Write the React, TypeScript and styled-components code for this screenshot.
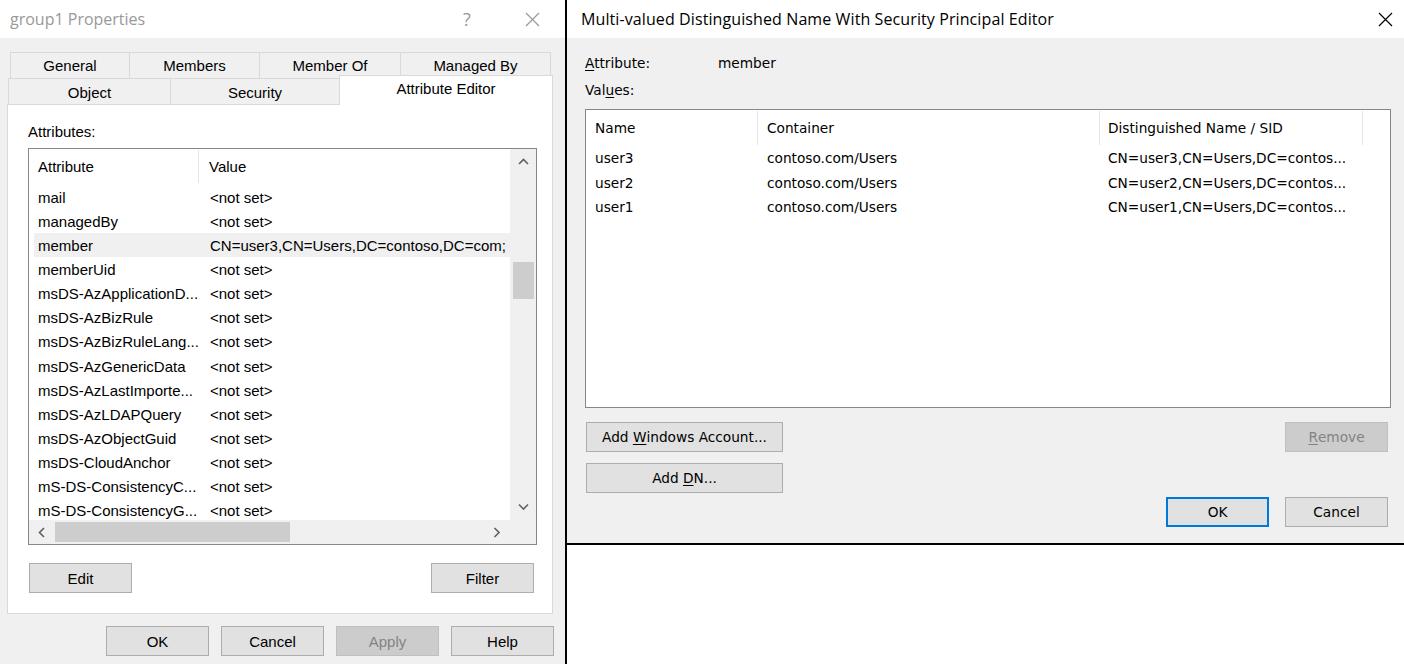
import React from "react";
import styled, { createGlobalStyle } from "styled-components";

const GlobalStyle = createGlobalStyle`
  *, *::before, *::after { box-sizing: border-box; }
  html, body { margin: 0; padding: 0; background: #ffffff; overflow: hidden; }
  #root { width: 1404px; height: 664px; }
`;

const CLASSIC = `"Liberation Sans", Arial, sans-serif`;
const TAHOMA = `"DejaVu Sans", Verdana, sans-serif`;
const SEGOE = `"Open Sans", "Noto Sans", sans-serif`;

const Screen = styled.div`
  display: flex;
  width: 1404px;
  height: 664px;
  background: #ffffff;
  overflow: hidden;
`;

/* ---------- shared window chrome ---------- */

const TitleBar = styled.div<{ $active?: boolean; $padLeft: number; $padRight: number }>`
  height: 38px;
  flex: none;
  display: flex;
  align-items: center;
  background: #ffffff;
  padding: 0 ${(p) => p.$padRight}px 0 ${(p) => p.$padLeft}px;
  font-family: ${SEGOE};
  font-size: 16px;
  letter-spacing: ${(p) => (p.$active ? "0.1px" : "0")};
  color: ${(p) => (p.$active ? "#000000" : "#999999")};
`;

const TitleText = styled.div`
  flex: 1;
  white-space: nowrap;
`;

const CaptionButtons = styled.div<{ $gap: number }>`
  display: flex;
  gap: ${(p) => p.$gap}px;
`;

const CaptionButton = styled.div<{ $active?: boolean }>`
  width: 36px;
  height: 38px;
  display: flex;
  align-items: center;
  justify-content: center;
  color: ${(p) => (p.$active ? "#000000" : "#999999")};
  font-family: ${SEGOE};
  font-size: 18px;
  letter-spacing: 0;
`;

const CloseGlyph = ({ color }: { color: string }) => (
  <svg width="15" height="15" viewBox="0 0 15 15">
    <path d="M1 1 L14 14 M14 1 L1 14" stroke={color} strokeWidth="1.2" fill="none" />
  </svg>
);

const Button = styled.div<{ $w: number; $disabled?: boolean; $default?: boolean }>`
  width: ${(p) => p.$w}px;
  height: 30px;
  flex: none;
  display: flex;
  align-items: center;
  justify-content: center;
  background: ${(p) => (p.$disabled ? "#cccccc" : "#e1e1e1")};
  border: ${(p) =>
    p.$default ? "2px solid #0078d7" : p.$disabled ? "1px solid #bfbfbf" : "1px solid #adadad"};
  color: ${(p) => (p.$disabled ? "#838383" : "#000000")};
  white-space: nowrap;
`;

const Chevron = ({ dir }: { dir: "up" | "down" | "left" | "right" }) => {
  const d =
    dir === "up"
      ? "M1 6 L5.5 1.5 L10 6"
      : dir === "down"
      ? "M1 1.5 L5.5 6 L10 1.5"
      : dir === "left"
      ? "M6 1 L1.5 5.5 L6 10"
      : "M1.5 1 L6 5.5 L1.5 10";
  const vertical = dir === "up" || dir === "down";
  return (
    <svg width={vertical ? 11 : 8} height={vertical ? 8 : 11} viewBox={vertical ? "0 0 11 8" : "0 0 8 11"}>
      <path d={d} stroke="#606060" strokeWidth="1.6" fill="none" />
    </svg>
  );
};

/* ---------- left: group1 Properties ---------- */

const PropertiesWindow = styled.div`
  width: 565px;
  height: 664px;
  flex: none;
  display: flex;
  flex-direction: column;
  background: #f0f0f0;
  font-family: ${CLASSIC};
  font-size: 15px;
  color: #000000;
`;

const TabArea = styled.div`
  display: flex;
  flex-direction: column;
  padding: 14px 12px 0 7px;
`;

const TabRow = styled.div<{ $indent: number }>`
  display: flex;
  align-items: flex-start;
  height: 26px;
  padding-left: ${(p) => p.$indent}px;
`;

const Tab = styled.div<{ $w: number; $selected?: boolean; $top?: boolean }>`
  width: ${(p) => p.$w}px;
  height: ${(p) => (p.$selected ? 30 : 26)}px;
  margin-top: ${(p) => (p.$selected ? -3 : 0)}px;
  margin-left: -1px;
  flex: none;
  display: flex;
  align-items: center;
  justify-content: center;
  padding-bottom: ${(p) => (p.$selected ? 5 : 0)}px;
  padding-top: ${(p) => (p.$top ? 0 : 1)}px;
  border: 1px solid #d9d9d9;
  border-bottom: none;
  background: ${(p) => (p.$selected ? "#ffffff" : "#f0f0f0")};
  position: relative;
  z-index: ${(p) => (p.$selected ? 2 : 1)};
  white-space: nowrap;
`;

const TabPanel = styled.div`
  height: 510px;
  background: #ffffff;
  border: 1px solid #d9d9d9;
  padding: 18px 0 0 20px;
  display: flex;
  flex-direction: column;
`;

const FieldLabel = styled.div`
  height: 17px;
  line-height: 17px;
`;

const ListBox = styled.div`
  margin-top: 8px;
  width: 509px;
  height: 397px;
  border: 1px solid #828790;
  background: #ffffff;
  display: grid;
  grid-template-columns: 1fr 26px;
  grid-template-rows: 1fr 24px;
`;

const ListContent = styled.div`
  overflow: hidden;
  display: flex;
  flex-direction: column;
`;

const AttrHeader = styled.div`
  display: grid;
  grid-template-columns: 170px 1fr;
  height: 36px;
  flex: none;
`;

const AttrHeaderCell = styled.div<{ $divider?: boolean; $pad: number }>`
  display: flex;
  align-items: center;
  padding-left: ${(p) => p.$pad}px;
  margin: 1px 0 2px;
  border-right: ${(p) => (p.$divider ? "1px solid #e5e5e5" : "none")};
`;

const AttrRow = styled.div<{ $highlight?: boolean }>`
  display: grid;
  grid-template-columns: 170px 1fr;
  height: 24.15px;
  flex: none;
  background: ${(p) =>
    p.$highlight ? "linear-gradient(to right, transparent 5px, #f0f0f0 5px)" : "transparent"};
`;

const AttrCell = styled.div<{ $pad: number }>`
  display: flex;
  align-items: center;
  padding-left: ${(p) => p.$pad}px;
  white-space: nowrap;
  overflow: hidden;
`;

const VScroll = styled.div`
  background: #f0f0f0;
  display: flex;
  flex-direction: column;
  align-items: center;
`;

const ArrowBox = styled.div<{ $w: number; $h: number }>`
  width: ${(p) => p.$w}px;
  height: ${(p) => p.$h}px;
  flex: none;
  display: flex;
  align-items: center;
  justify-content: center;
`;

const VTrack = styled.div`
  flex: 1;
  width: 100%;
  display: flex;
  flex-direction: column;
  align-items: center;
`;

const VThumb = styled.div<{ $offset: number; $size: number }>`
  margin-top: ${(p) => p.$offset}px;
  width: 21px;
  height: ${(p) => p.$size}px;
  background: #cdcdcd;
`;

const HScroll = styled.div`
  background: #f0f0f0;
  display: flex;
  align-items: center;
`;

const HTrack = styled.div`
  flex: 1;
  height: 100%;
  display: flex;
  align-items: center;
`;

const HThumb = styled.div<{ $offset: number; $size: number }>`
  margin-left: ${(p) => p.$offset}px;
  width: ${(p) => p.$size}px;
  height: 20px;
  background: #cdcdcd;
`;

const ScrollCorner = styled.div`
  background: #f0f0f0;
`;

const PanelButtons = styled.div`
  margin-top: 18px;
  width: 506px;
  padding-left: 1px;
  display: flex;
  justify-content: space-between;
`;

const DialogFooter = styled.div`
  margin-top: 12px;
  display: flex;
  justify-content: flex-end;
  gap: 12px;
  padding-right: 11px;
`;

/* ---------- right: Multi-valued editor ---------- */

const RightColumn = styled.div`
  width: 839px;
  flex: none;
  border-left: 2px solid #000000;
  background: #ffffff;
  display: flex;
  flex-direction: column;
`;

const EditorWindow = styled.div`
  height: 545px;
  flex: none;
  border-bottom: 2px solid #000000;
  background: #f0f0f0;
  display: flex;
  flex-direction: column;
  font-family: ${TAHOMA};
  font-size: 13.7px;
  color: #000000;
`;

const EditorBody = styled.div`
  padding: 16px 13px 0 18px;
  display: flex;
  flex-direction: column;
`;

const LabelLine = styled.div<{ $gapTop: number }>`
  display: flex;
  height: 18px;
  line-height: 18px;
  margin-top: ${(p) => p.$gapTop}px;
`;

const LabelKey = styled.div`
  width: 133px;
  flex: none;
`;

const ValuesList = styled.div`
  margin-top: 10px;
  width: 806px;
  height: 299px;
  border: 1px solid #828790;
  background: #ffffff;
  display: flex;
  flex-direction: column;
  overflow: hidden;
`;

const VALUE_COLS = "172px 342px 263px 1fr";

const ValuesHeader = styled.div`
  display: grid;
  grid-template-columns: ${VALUE_COLS};
  height: 36px;
  flex: none;
`;

const ValuesHeaderCell = styled.div<{ $divider?: boolean; $pad: number }>`
  display: flex;
  align-items: center;
  padding-left: ${(p) => p.$pad}px;
  margin: 1px 0;
  border-right: ${(p) => (p.$divider ? "1px solid #e5e5e5" : "none")};
  white-space: nowrap;
`;

const ValuesRow = styled.div`
  display: grid;
  grid-template-columns: ${VALUE_COLS};
  height: 24.5px;
  flex: none;
`;

const ValuesCell = styled.div<{ $pad: number }>`
  display: flex;
  align-items: center;
  padding-left: ${(p) => p.$pad}px;
  white-space: nowrap;
  overflow: hidden;
`;

const EditorActions = styled.div`
  margin-top: 14px;
  display: flex;
  justify-content: space-between;
  padding: 0 3px 0 1px;
`;

const ActionStack = styled.div<{ $alignEnd?: boolean }>`
  display: flex;
  flex-direction: column;
  gap: 11px;
  align-items: ${(p) => (p.$alignEnd ? "flex-end" : "flex-start")};
`;

const ConfirmRow = styled.div`
  margin-top: 34px;
  display: flex;
  gap: 16px;
`;

const Key = styled.span`
  text-decoration: underline;
  text-underline-offset: 2px;
  text-decoration-thickness: 1px;
`;

/* ---------- data ---------- */

const attributes: { name: string; value: string; highlight?: boolean }[] = [
  { name: "mail", value: "<not set>" },
  { name: "managedBy", value: "<not set>" },
  {
    name: "member",
    value:
      "CN=user3,CN=Users,DC=contoso,DC=com; CN=user2,CN=Users,DC=contoso,DC=com; CN=user1,CN=Users,DC=contoso,DC=com",
    highlight: true,
  },
  { name: "memberUid", value: "<not set>" },
  { name: "msDS-AzApplicationD...", value: "<not set>" },
  { name: "msDS-AzBizRule", value: "<not set>" },
  { name: "msDS-AzBizRuleLang...", value: "<not set>" },
  { name: "msDS-AzGenericData", value: "<not set>" },
  { name: "msDS-AzLastImporte...", value: "<not set>" },
  { name: "msDS-AzLDAPQuery", value: "<not set>" },
  { name: "msDS-AzObjectGuid", value: "<not set>" },
  { name: "msDS-CloudAnchor", value: "<not set>" },
  { name: "mS-DS-ConsistencyC...", value: "<not set>" },
  { name: "mS-DS-ConsistencyG...", value: "<not set>" },
];

const members = [
  { name: "user3", container: "contoso.com/Users", dn: "CN=user3,CN=Users,DC=contos..." },
  { name: "user2", container: "contoso.com/Users", dn: "CN=user2,CN=Users,DC=contos..." },
  { name: "user1", container: "contoso.com/Users", dn: "CN=user1,CN=Users,DC=contos..." },
];

export default function App() {
  return (
    <>
      <GlobalStyle />
      <Screen>
        <PropertiesWindow>
          <TitleBar $padLeft={10} $padRight={15}>
            <TitleText>group1 Properties</TitleText>
            <CaptionButtons $gap={29}>
              <CaptionButton>?</CaptionButton>
              <CaptionButton>
                <CloseGlyph color="#999999" />
              </CaptionButton>
            </CaptionButtons>
          </TitleBar>

          <TabArea>
            <TabRow $indent={4}>
              <Tab $w={120} $top>General</Tab>
              <Tab $w={131} $top>Members</Tab>
              <Tab $w={142} $top>Member Of</Tab>
              <Tab $w={151} $top>Managed By</Tab>
            </TabRow>
            <TabRow $indent={2}>
              <Tab $w={163}>Object</Tab>
              <Tab $w={170}>Security</Tab>
              <Tab $w={214} $selected>
                Attribute Editor
              </Tab>
            </TabRow>

            <TabPanel>
              <FieldLabel>Attributes:</FieldLabel>
              <ListBox>
                <ListContent>
                  <AttrHeader>
                    <AttrHeaderCell $pad={9} $divider>
                      Attribute
                    </AttrHeaderCell>
                    <AttrHeaderCell $pad={10}>Value</AttrHeaderCell>
                  </AttrHeader>
                  {attributes.map((a) => (
                    <AttrRow key={a.name} $highlight={a.highlight}>
                      <AttrCell $pad={9}>{a.name}</AttrCell>
                      <AttrCell $pad={11}>{a.value}</AttrCell>
                    </AttrRow>
                  ))}
                </ListContent>
                <VScroll>
                  <ArrowBox $w={26} $h={26}>
                    <Chevron dir="up" />
                  </ArrowBox>
                  <VTrack>
                    <VThumb $offset={87} $size={37} />
                  </VTrack>
                  <ArrowBox $w={26} $h={26}>
                    <Chevron dir="down" />
                  </ArrowBox>
                </VScroll>
                <HScroll>
                  <ArrowBox $w={26} $h={24}>
                    <Chevron dir="left" />
                  </ArrowBox>
                  <HTrack>
                    <HThumb $offset={0} $size={235} />
                  </HTrack>
                  <ArrowBox $w={26} $h={24}>
                    <Chevron dir="right" />
                  </ArrowBox>
                </HScroll>
                <ScrollCorner />
              </ListBox>
              <PanelButtons>
                <Button $w={103}>Edit</Button>
                <Button $w={103}>Filter</Button>
              </PanelButtons>
            </TabPanel>
          </TabArea>

          <DialogFooter>
            <Button $w={103}>OK</Button>
            <Button $w={103}>Cancel</Button>
            <Button $w={103} $disabled>
              Apply
            </Button>
            <Button $w={103}>Help</Button>
          </DialogFooter>
        </PropertiesWindow>

        <RightColumn>
          <EditorWindow>
            <TitleBar $active $padLeft={14} $padRight={1}>
              <TitleText>Multi-valued Distinguished Name With Security Principal Editor</TitleText>
              <CaptionButtons $gap={0}>
                <CaptionButton $active>
                  <CloseGlyph color="#000000" />
                </CaptionButton>
              </CaptionButtons>
            </TitleBar>

            <EditorBody>
              <LabelLine $gapTop={0}>
                <LabelKey>
                  <Key>A</Key>ttribute:
                </LabelKey>
                <div>member</div>
              </LabelLine>
              <LabelLine $gapTop={9}>
                <LabelKey>
                  Val<Key>u</Key>es:
                </LabelKey>
              </LabelLine>

              <ValuesList>
                <ValuesHeader>
                  <ValuesHeaderCell $pad={9} $divider>
                    Name
                  </ValuesHeaderCell>
                  <ValuesHeaderCell $pad={9} $divider>
                    Container
                  </ValuesHeaderCell>
                  <ValuesHeaderCell $pad={8} $divider>
                    Distinguished Name / SID
                  </ValuesHeaderCell>
                  <ValuesHeaderCell $pad={0} />
                </ValuesHeader>
                {members.map((m) => (
                  <ValuesRow key={m.name}>
                    <ValuesCell $pad={9}>{m.name}</ValuesCell>
                    <ValuesCell $pad={9}>{m.container}</ValuesCell>
                    <ValuesCell $pad={8}>{m.dn}</ValuesCell>
                    <ValuesCell $pad={0} />
                  </ValuesRow>
                ))}
              </ValuesList>

              <EditorActions>
                <ActionStack>
                  <Button $w={197}>
                    Add&nbsp;<Key>W</Key>indows Account...
                  </Button>
                  <Button $w={197}>
                    Add&nbsp;<Key>D</Key>N...
                  </Button>
                </ActionStack>
                <ActionStack $alignEnd>
                  <Button $w={103} $disabled>
                    <Key>R</Key>emove
                  </Button>
                  <ConfirmRow>
                    <Button $w={103} $default>
                      OK
                    </Button>
                    <Button $w={103}>Cancel</Button>
                  </ConfirmRow>
                </ActionStack>
              </EditorActions>
            </EditorBody>
          </EditorWindow>
        </RightColumn>
      </Screen>
    </>
  );
}
